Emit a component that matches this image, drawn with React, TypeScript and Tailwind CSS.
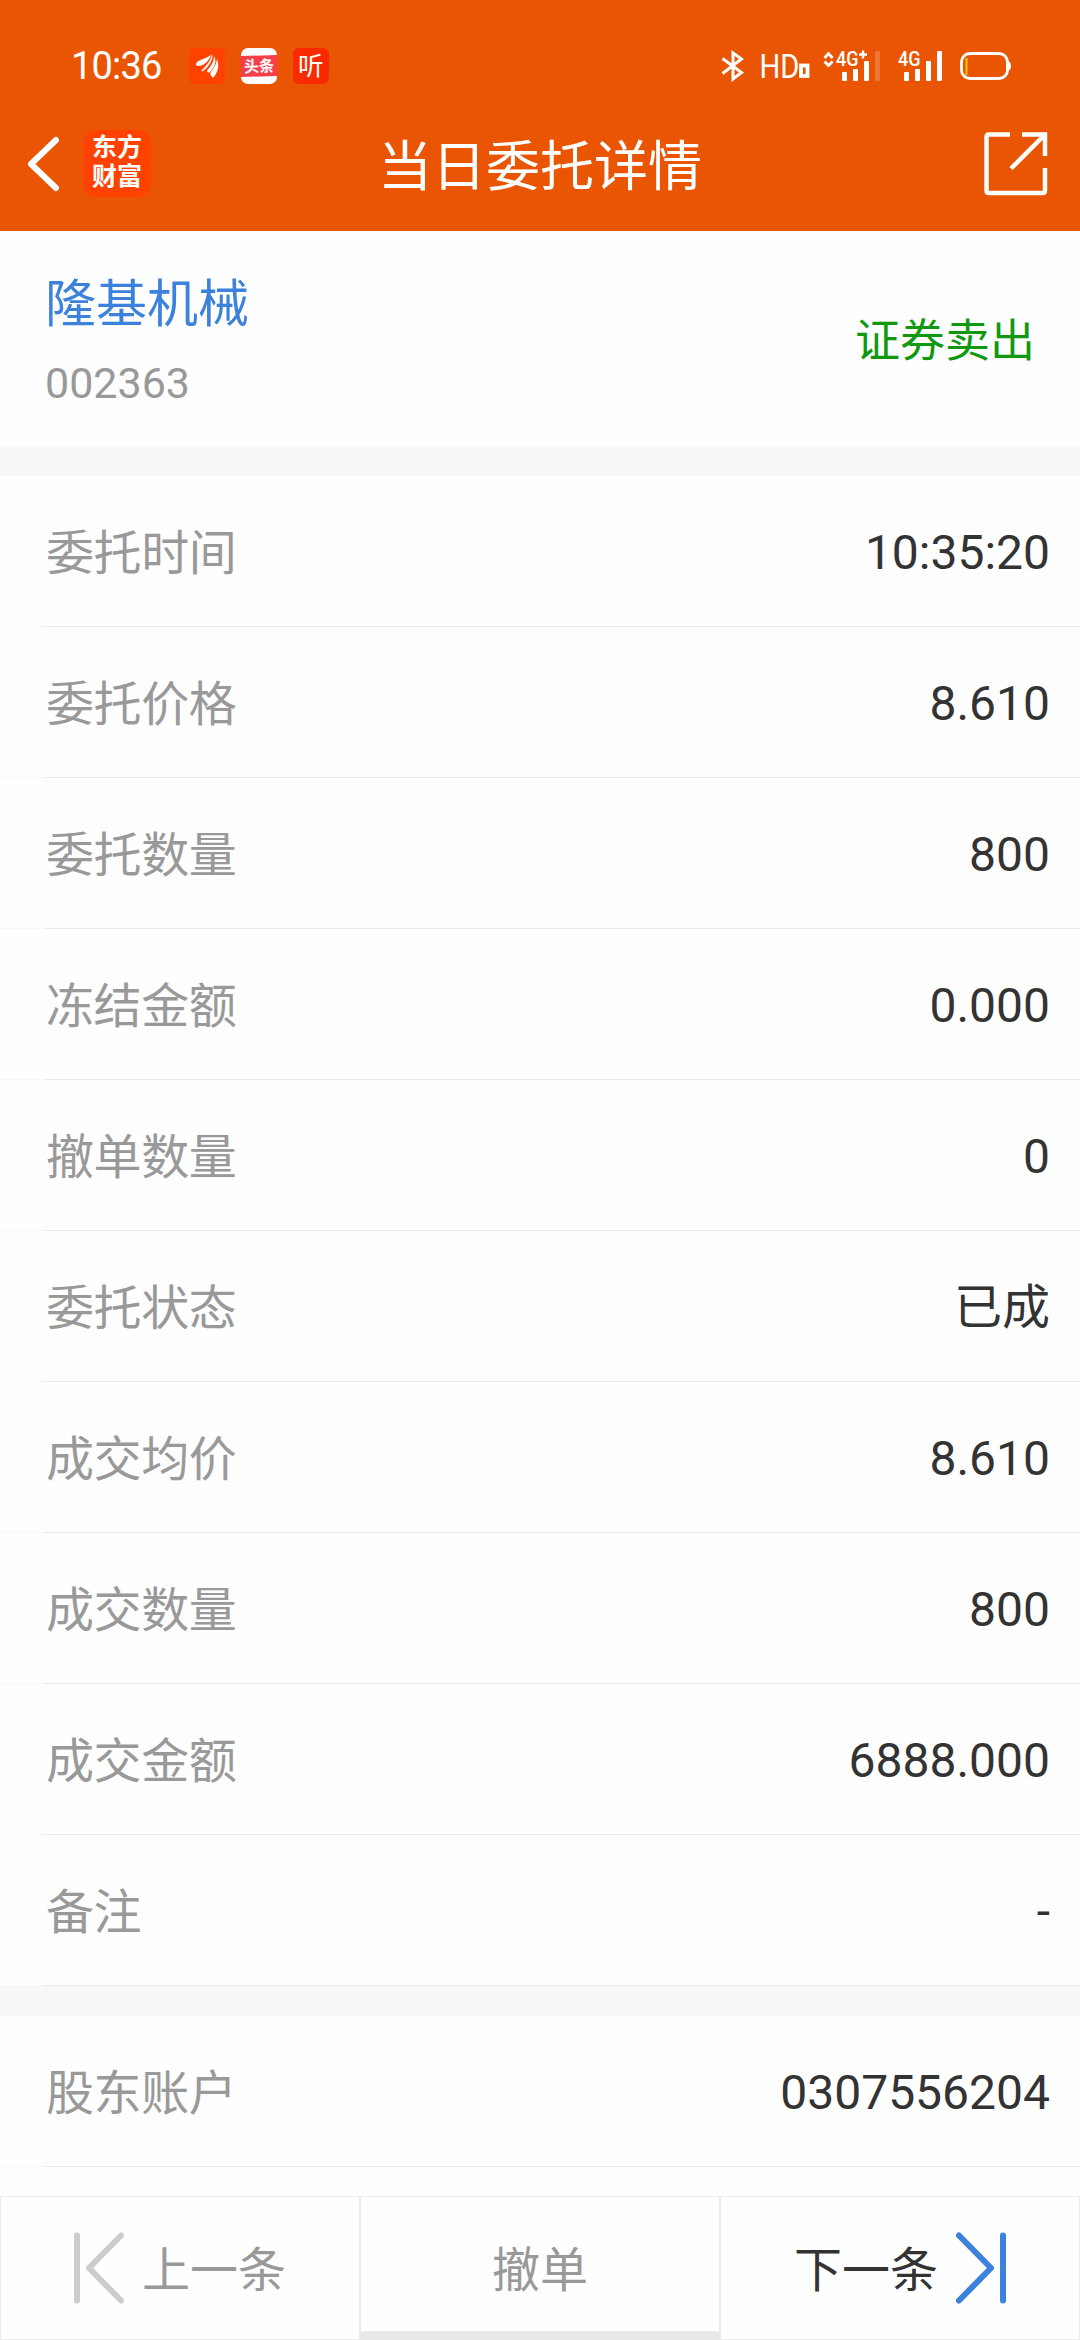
import { clsx } from 'clsx'

const orderRows = [
  { label: '委托时间', value: '10:35:20' },
  { label: '委托价格', value: '8.610' },
  { label: '委托数量', value: '800' },
  { label: '冻结金额', value: '0.000' },
  { label: '撤单数量', value: '0' },
  { label: '委托状态', value: '已成' },
  { label: '成交均价', value: '8.610' },
  { label: '成交数量', value: '800' },
  { label: '成交金额', value: '6888.000' },
  { label: '备注', value: '-' },
]

const accountRows = [{ label: '股东账户', value: '0307556204' }]

function StatusBar() {
  return (
    <div className="flex h-24 items-center justify-between pt-9 pl-[71px] pr-[69px]">
      <div className="flex items-center">
        <span className="w-[118px] text-[38px] leading-none tracking-[-0.8px]">10:36</span>

        {/* notification icons */}
        <div className="flex gap-4">
          <svg className="h-9 w-9" viewBox="0 0 36 36">
            <rect width="36" height="36" rx="5" fill="#ff4200" />
            <g fill="#fff">
              <path d="M7 16C8 12 14 12 22 7C20 13 15 18 9 18C7.500 18 7 17 7 16Z" />
              <path d="M23 6C25 10 20 19 14 23C12.500 24 12 23 13 22C18 17 22 12 23 6Z" />
              <path d="M25 8C28 13 26 19 21 24C19.500 25.500 17 24 18.500 22C22 18 25 14 25 8Z" />
              <path d="M28 11C30.500 18 29 24 24.500 29.500C22 29 20.500 26 22 24C25 20 27.500 16 28 11Z" />
            </g>
          </svg>
          <svg className="h-9 w-9" viewBox="0 0 36 36">
            <rect width="36" height="36" rx="7" fill="#fff" />
            <path d="M0 8L36 7V28L0 29Z" fill="#f73f4c" />
            <text x="3" y="24" fill="#fff" fontSize="16" fontWeight="700" textLength="30" lengthAdjust="spacingAndGlyphs" transform="rotate(-2 18 18)">
              头条
            </text>
          </svg>
          <svg className="h-9 w-9" viewBox="0 0 36 36">
            <rect width="36" height="36" rx="6" fill="#fa2a00" />
            <text x="5" y="27" fill="#fff" fontSize="25.500">
              听
            </text>
          </svg>
        </div>
      </div>

      <div className="flex items-center">
        <svg className="h-8 w-6" viewBox="0 0 24 32" fill="none" stroke="#fff" strokeWidth="3">
          <path d="M2.500 8.500L21.500 22.500L13 29V3L21.500 9L2.500 23.500" />
        </svg>
        <svg className="ml-[15px] h-8 w-[52px] overflow-visible" viewBox="0 0 52 32">
          <text x="0.500" y="28" fill="#fff" fontSize="33" textLength="40" lengthAdjust="spacingAndGlyphs">
            HD
          </text>
          <rect x="42" y="15.500" width="6.500" height="10.500" fill="none" stroke="#fff" strokeWidth="3.800" />
        </svg>
        <svg className="ml-3 h-8 w-[58px] overflow-visible" viewBox="0 0 58 32" fill="#fff">
          <path d="M1.500 8L5.500 3.500L9.500 8M1.500 11.500L5.500 15.500L9.500 11.500" fill="none" stroke="#fff" strokeWidth="2.800" />
          <text x="13" y="15.700" fontSize="20" fontWeight="500" textLength="22.500" lengthAdjust="spacingAndGlyphs">
            4G
          </text>
          <path d="M36 4.500H44M40 0.500V8.500" stroke="#fff" strokeWidth="2.400" />
          <rect x="19" y="22" width="5" height="9" rx="1" />
          <rect x="30" y="19" width="5" height="12" rx="1" />
          <rect x="41" y="11" width="5" height="20" rx="1" />
          <rect x="52" y="1" width="5" height="30" rx="1" opacity="0.2" />
        </svg>
        <svg className="ml-4 h-8 w-[46px] overflow-visible" viewBox="0 0 46 32" fill="#fff">
          <text x="1" y="15.700" fontSize="20" fontWeight="500" textLength="22.500" lengthAdjust="spacingAndGlyphs">
            4G
          </text>
          <rect x="7" y="22" width="5" height="9" rx="1" />
          <rect x="18" y="19" width="5" height="12" rx="1" />
          <rect x="29" y="11" width="5" height="20" rx="1" />
          <rect x="40" y="1" width="5" height="30" rx="1" />
        </svg>
        <svg className="ml-[17px] h-8 w-[51px]" viewBox="0 0 51 32">
          <rect x="1.500" y="3.500" width="46" height="25" rx="8.500" fill="none" stroke="#fff" strokeWidth="2.800" />
          <path d="M48 11Q51 12 51 16Q51 20 48 21Z" fill="#fff" />
          <rect x="5.500" y="8" width="2" height="17" fill="#ffc800" />
        </svg>
      </div>
    </div>
  )
}

function NavBar() {
  return (
    <div className="flex h-[135px] items-center justify-between pl-6 pr-8">
      <div className="flex w-40 items-center">
        <svg className="h-[60px] w-10" viewBox="0 0 40 60" fill="none" stroke="#fff" strokeWidth="6" strokeLinecap="round">
          <path d="M32 6L7 30L32 54" strokeLinejoin="round" />
        </svg>
        <div className="ml-[19px] flex h-[67px] w-[68px] flex-col items-center justify-center rounded-[14px] bg-[#ff4200] pb-[3px] text-[25px] leading-[29px] font-bold">
          <span>东方</span>
          <span>财富</span>
        </div>
      </div>
      <h1 className="pt-2 text-[54px] leading-none">当日委托详情</h1>
      <div className="flex w-[152px] justify-end">
        <svg className="h-16 w-16" viewBox="0 0 64 64" fill="none" stroke="#fff" strokeWidth="4.500">
          <path d="M26 2.500H5Q2.500 2.500 2.500 5V58.500Q2.500 61 5 61H58.500Q61 61 61 58.500V36" />
          <path d="M38 2.500H61V24M60 3.500L27 36.500" />
        </svg>
      </div>
    </div>
  )
}

function Row({ label, value }: { label: string; value: string }) {
  return (
    <div className="flex h-[151px] flex-col">
      <div className="flex flex-1 items-center justify-between pl-[46px] pr-[30px] text-[48px] leading-none">
        <span className="pt-1.5 tracking-[-0.4px] text-[#999]">{label}</span>
        <span className="pt-1 text-[#333]">{value}</span>
      </div>
      {/* the divider is fainter under the left inset */}
      <div className="flex h-px">
        <div className="w-[45px] bg-[#f7f7f7]" />
        <div className="flex-1 bg-[#ebebeb]" />
      </div>
    </div>
  )
}

function SkipIcon({ next = false }: { next?: boolean }) {
  return (
    <svg
      className={clsx('h-[72px] w-[50px]', next ? 'rotate-180 text-[#3c82dc]' : 'text-[#ccc]')}
      viewBox="0 0 50 72"
      fill="none"
      stroke="currentColor"
      strokeWidth="6"
      strokeLinecap="round"
      strokeLinejoin="round"
    >
      <path d="M3 3.500V68.500M47 3.500L15 36L47 68.500" />
    </svg>
  )
}

function BottomBar() {
  return (
    <div className="relative mt-auto grid h-36 grid-cols-3 text-[48px] leading-none">
      <button className="flex items-center justify-center gap-[18px] border border-[#ebebeb] text-[#999]">
        <SkipIcon />
        <span className="pt-1.5">上一条</span>
      </button>
      <button className="flex items-center justify-center border border-[#ebebeb] pt-1.5 text-[#999]">撤单</button>
      <button className="flex items-center justify-center gap-[18px] border border-[#ebebeb] text-[#333]">
        <span className="pt-1.5">下一条</span>
        <SkipIcon next />
      </button>
      {/* gesture handle */}
      <div className="absolute bottom-0 left-1/3 h-[9px] w-1/3 rounded-[4px] bg-[#e8e8e8]" />
    </div>
  )
}

export default function App() {
  return (
    <div className="flex h-[2340px] w-[1080px] flex-col overflow-hidden bg-[#fefefe] font-[Roboto,'Noto_Sans_CJK_SC',sans-serif]">
      <header className="h-[231px] bg-[#ea5504] text-white">
        <StatusBar />
        <NavBar />
      </header>

      <section className="flex h-[215px] items-center justify-between pl-[45px] pr-[45px]">
        <div className="flex flex-col pt-2">
          <span className="text-[51px] leading-[60px] text-[#3c82dc]">隆基机械</span>
          <span className="mt-5 text-[43px] leading-[56px] text-[#999]">002363</span>
        </div>
        <span className="pt-1.5 text-[45px] leading-none text-[#109910]">证券卖出</span>
      </section>

      <div className="h-[30px] bg-[#f7f8fa]" />
      {orderRows.map((row) => (
        <Row key={row.label} {...row} />
      ))}
      <div className="h-[30px] bg-[#f7f8fa]" />
      {accountRows.map((row) => (
        <Row key={row.label} {...row} />
      ))}

      <BottomBar />
    </div>
  )
}
